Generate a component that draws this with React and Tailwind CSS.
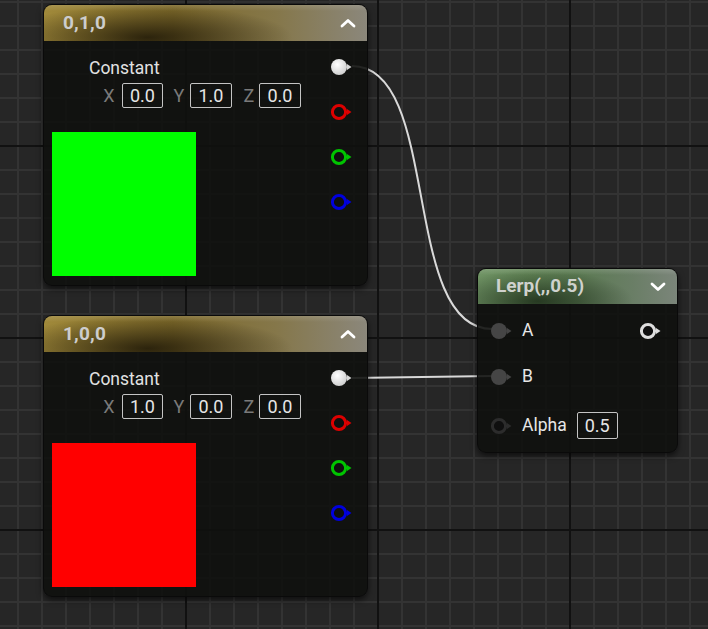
import React from "react";

const W = 708;
const H = 629;

const Grid = () => {
  const v = [];
  const h = [];
  for (let x = -6; x < W + 24; x += 24) v.push(x);
  for (let y = 2; y < H + 24; y += 24) h.push(y);
  const isMajorX = (x) => (x - 186) % 192 === 0;
  const isMajorY = (y) => (y - 146) % 192 === 0;
  return (
    <svg className="absolute inset-0" width={W} height={H}>
      <rect width={W} height={H} fill="#262626" />
      {v.filter((x) => !isMajorX(x)).map((x) => (
        <rect key={"v" + x} x={x - 1} y={0} width={2} height={H} fill="#333333" />
      ))}
      {h.filter((y) => !isMajorY(y)).map((y) => (
        <rect key={"h" + y} x={0} y={y - 1} width={W} height={2} fill="#333333" />
      ))}
      {v.filter(isMajorX).map((x) => (
        <rect key={"mv" + x} x={x - 1} y={0} width={2} height={H} fill="#111111" />
      ))}
      {h.filter(isMajorY).map((y) => (
        <rect key={"mh" + y} x={0} y={y - 1} width={W} height={2} fill="#111111" />
      ))}
      {/* wires */}
      <path d="M 352 66 C 442 66, 400 329, 492 329" fill="none" stroke="#d9d9d9" strokeWidth="2" />
      <path d="M 352 378 L 492 376" fill="none" stroke="#d9d9d9" strokeWidth="2" />
    </svg>
  );
};

const Pin = ({ kind, color = "#fff" }) => {
  if (kind === "white") {
    return (
      <svg width="24" height="18" viewBox="0 0 24 18" className="shrink-0">
        <defs>
          <radialGradient id="pw" cx="40%" cy="35%" r="70%">
            <stop offset="0%" stopColor="#ffffff" />
            <stop offset="100%" stopColor="#cdcdcd" />
          </radialGradient>
        </defs>
        <circle cx="9" cy="9" r="8" fill="url(#pw)" />
        <polygon points="17,6 21.5,9 17,12" fill="#d8d8d8" />
      </svg>
    );
  }
  if (kind === "gray") {
    return (
      <svg width="24" height="18" viewBox="0 0 24 18" className="shrink-0">
        <circle cx="9" cy="9" r="8" fill="#454545" />
        <polygon points="17,6 21.5,9 17,12" fill="#454545" />
      </svg>
    );
  }
  return (
    <svg width="24" height="18" viewBox="0 0 24 18" className="shrink-0">
      <circle cx="9" cy="9" r="6.6" fill="#0f0f0f" stroke={color} strokeWidth="3" />
      <polygon points="17,6 21.5,9 17,12" fill={color} />
    </svg>
  );
};

const Chevron = ({ up }) => (
  <svg width="16" height="10" viewBox="0 0 16 10">
    {up ? (
      <polyline points="2,8 8,2.5 14,8" fill="none" stroke="#ffffff" strokeWidth="2.8" strokeLinecap="round" strokeLinejoin="round" />
    ) : (
      <polyline points="2,2 8,7.5 14,2" fill="none" stroke="#ffffff" strokeWidth="2.8" strokeLinecap="round" strokeLinejoin="round" />
    )}
  </svg>
);

const ValueBox = ({ value, w = "w-[41px]", h = "h-[25px]" }) => (
  <div className={`${w} ${h} border-[1.5px] border-[#c4c4c4] rounded-[2px] flex items-center justify-center text-[18px] text-[#e6e6e6] leading-none`}>
    {value}
  </div>
);

const Label = ({ children, cls }) => (
  <span className={`w-[20px] text-center text-[18px] text-[#7a7a7a] leading-none ${cls}`}>{children}</span>
);

const ConstantNode = ({ top, title, values, swatch }) => (
  <div
    className={`absolute left-[43px] w-[325px] h-[282px] rounded-[9px] border border-[#0a0a0a] bg-[rgba(15,17,14,0.9)] shadow-[0_3px_6px_rgba(0,0,0,0.6)] overflow-hidden flex flex-col ${top}`}
  >
    <div className="relative h-[36px] shrink-0 flex items-center justify-between pl-[19px] pr-[11px] bg-[linear-gradient(to_right,#a0893a_0%,#907a31_18%,#7e6a2a_40%,#85774a_72%,#8b877b_100%)]">
      <div className="absolute inset-0 bg-[radial-gradient(ellipse_45%_90%_at_32%_90%,rgba(10,6,0,0.72),rgba(0,0,0,0)_100%)]" />
      <div className="absolute inset-x-0 top-0 h-[6px] bg-[linear-gradient(to_bottom,rgba(255,255,255,0.12),rgba(255,255,255,0))]" />
      <span className="relative text-[19px] font-bold text-[#cdcdcd] tracking-[0.2px]">{title}</span>
      <span className="relative"><Chevron up /></span>
    </div>
    <div className="flex-1 flex justify-between">
      <div className="flex flex-col">
        <div className="pl-[45px] pt-[17px] h-[37px] text-[17.5px] leading-[20px] text-[#e2e2e2]">Constant</div>
        <div className="flex items-center pl-[55px] mt-[5px] h-[25px]">
          <Label>X</Label>
          <div className="ml-[3px]"><ValueBox value={values[0]} /></div>
          <Label cls="ml-[6px]">Y</Label>
          <div className="ml-[1px]"><ValueBox value={values[1]} w="w-[42px]" /></div>
          <Label cls="ml-[7px]">Z</Label>
          <div className="ml-[0px]"><ValueBox value={values[2]} w="w-[42px]" /></div>
        </div>
        <div className={`ml-[8px] mt-[24px] w-[144px] h-[144px] ${swatch}`} />
      </div>
      <div className="flex flex-col gap-[27px] pt-[17px] pr-[13px]">
        <Pin kind="white" />
        <Pin kind="ring" color="#dd0000" />
        <Pin kind="ring" color="#00c400" />
        <Pin kind="ring" color="#0000dd" />
      </div>
    </div>
  </div>
);

const LerpNode = () => (
  <div className="absolute left-[477px] top-[268px] w-[201px] h-[185px] rounded-[9px] border border-[#0a0a0a] bg-[rgba(15,17,14,0.9)] shadow-[0_3px_6px_rgba(0,0,0,0.6)] overflow-hidden flex flex-col">
    <div className="relative h-[35px] shrink-0 flex items-center justify-between pl-[18px] pr-[11px] bg-[linear-gradient(to_right,#6f9364_0%,#628556_25%,#5b7a52_50%,#6a7e66_78%,#7b857a_100%)]">
      <div className="absolute inset-0 bg-[radial-gradient(ellipse_48%_90%_at_30%_92%,rgba(0,8,0,0.6),rgba(0,0,0,0)_100%)]" />
      <div className="absolute inset-x-0 top-0 h-[6px] bg-[linear-gradient(to_bottom,rgba(255,255,255,0.14),rgba(255,255,255,0))]" />
      <span className="relative text-[19px] font-bold text-[#cfd2cd]">Lerp(,,0.5)</span>
      <span className="relative mt-[1px]"><Chevron /></span>
    </div>
    <div className="flex flex-col pl-[12px]">
      <div className="flex items-center justify-between h-[20px] mt-[17px] pr-[14px]">
        <div className="flex items-center">
          <Pin kind="gray" />
          <span className="ml-[8px] text-[17.5px] text-[#e6e6e6] leading-none">A</span>
        </div>
        <Pin kind="ring" color="#dedede" />
      </div>
      <div className="flex items-center h-[20px] mt-[26px]">
        <Pin kind="gray" />
        <span className="ml-[8px] text-[17.5px] text-[#e6e6e6] leading-none">B</span>
      </div>
      <div className="flex items-center h-[27px] mt-[25px]">
        <Pin kind="ring" color="#2c2c2c" />
        <span className="ml-[8px] text-[17.5px] text-[#e6e6e6] leading-none">Alpha</span>
        <div className="ml-[10px]"><ValueBox value="0.5" h="h-[27px]" /></div>
      </div>
    </div>
  </div>
);

export default function App() {
  return (
    <div className="relative w-[708px] h-[629px] overflow-hidden bg-[#262626] font-['Roboto',sans-serif]">
      <Grid />
      <ConstantNode top="top-[4px]" title="0,1,0" values={["0.0", "1.0", "0.0"]} swatch="bg-[#00ff00]" />
      <ConstantNode top="top-[315px]" title="1,0,0" values={["1.0", "0.0", "0.0"]} swatch="bg-[#ff0000]" />
      <LerpNode />
    </div>
  );
}
